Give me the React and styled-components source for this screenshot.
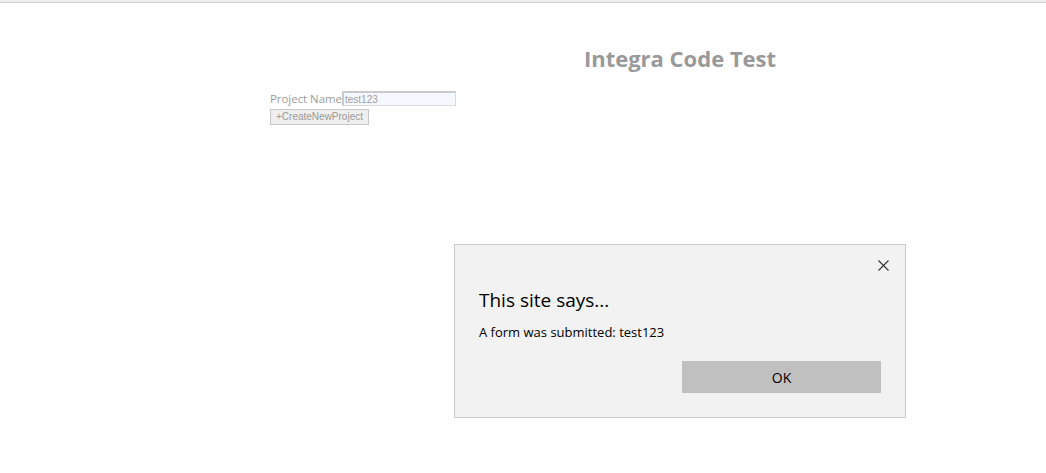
import React, { useState } from 'react';
import styled, { createGlobalStyle } from 'styled-components';

const GlobalStyle = createGlobalStyle`
  html, body {
    margin: 0;
    padding: 0;
    background: #ffffff;
    font-family: "Open Sans", "Noto Sans", sans-serif;
  }
  #root {
    position: relative;
    min-height: 473px;
  }
`;

const TopStrip = styled.div`
  height: 2px;
  background: #efefef;
  border-bottom: 1px solid #cfcfcf;
`;

const Main = styled.main`
  padding: 0 0 0 270px;
`;

const Title = styled.h1`
  width: 820px;
  margin: 40px 0 18px;
  text-align: center;
  font-size: 22px;
  font-weight: 700;
  color: #999999;
  line-height: 30px;
`;

const Form = styled.form`
  display: flex;
  flex-direction: column;
  align-items: flex-start;
  gap: 3px;
`;

const Row = styled.div`
  display: flex;
  align-items: center;
`;

const Label = styled.label`
  font-size: 11.4px;
  color: #9a9a9a;
  line-height: 15px;
`;

const TextInput = styled.input`
  width: 114px;
  height: 15px;
  box-sizing: border-box;
  padding: 0 1px;
  margin: 0;
  border: 1px solid #dcdcdc;
  border-top: 2px solid #c9c9c9;
  border-left: 2px solid #c9c9c9;
  background: #f5f8ff;
  font-family: "Liberation Sans", Arial, sans-serif;
  font-size: 10px;
  color: #a0a0a0;
  outline: none;
`;

const SmallButton = styled.button`
  height: 16px;
  padding: 0 5px;
  margin: 0;
  border: 1px solid #c8c8c8;
  background: #efefef;
  font-family: "Liberation Sans", Arial, sans-serif;
  font-size: 10px;
  color: #9a9a9a;
  line-height: 14px;
`;

const Dialog = styled.div`
  position: absolute;
  left: 454px;
  top: 244px;
  width: 452px;
  height: 174px;
  box-sizing: border-box;
  background: #f2f2f2;
  border: 1px solid #cccccc;
  display: flex;
  flex-direction: column;
  padding: 0 24px;
`;

const DialogTop = styled.div`
  display: flex;
  justify-content: flex-end;
  height: 40px;
  margin-right: -24px;
`;

const CloseButton = styled.button`
  width: 44px;
  height: 40px;
  border: none;
  background: transparent;
  display: flex;
  align-items: center;
  justify-content: center;
  padding: 0;
  cursor: pointer;
`;

const DialogTitle = styled.div`
  font-size: 19px;
  color: #000000;
  line-height: 26px;
  margin-top: 2px;
`;

const DialogMessage = styled.div`
  font-size: 13px;
  color: #000000;
  line-height: 18px;
  margin-top: 10px;
`;

const Actions = styled.div`
  display: flex;
  justify-content: flex-end;
  margin-top: 20px;
`;

const OkButton = styled.button`
  width: 199px;
  height: 32px;
  border: none;
  background: #c0c0c0;
  font-family: "Open Sans", "Noto Sans", sans-serif;
  font-size: 14px;
  color: #000000;
  margin-right: 0;
`;

const CloseIcon = () => (
  <svg width="11" height="11" viewBox="0 0 11 11">
    <path d="M0.5 0.5 L10.5 10.5 M10.5 0.5 L0.5 10.5" stroke="#333" strokeWidth="1.1" fill="none" />
  </svg>
);

export default function App() {
  const [name, setName] = useState('test123');

  return (
    <>
      <GlobalStyle />
      <TopStrip />
      <Main>
        <Title>Integra Code Test</Title>
        <Form onSubmit={(e) => e.preventDefault()}>
          <Row>
            <Label htmlFor="project">Project Name</Label>
            <TextInput id="project" value={name} onChange={(e) => setName(e.target.value)} />
          </Row>
          <SmallButton type="submit">+CreateNewProject</SmallButton>
        </Form>
      </Main>
      <Dialog role="dialog">
        <DialogTop>
          <CloseButton aria-label="Close">
            <CloseIcon />
          </CloseButton>
        </DialogTop>
        <DialogTitle>This site says...</DialogTitle>
        <DialogMessage>A form was submitted: {name}</DialogMessage>
        <Actions>
          <OkButton>OK</OkButton>
        </Actions>
      </Dialog>
    </>
  );
}
